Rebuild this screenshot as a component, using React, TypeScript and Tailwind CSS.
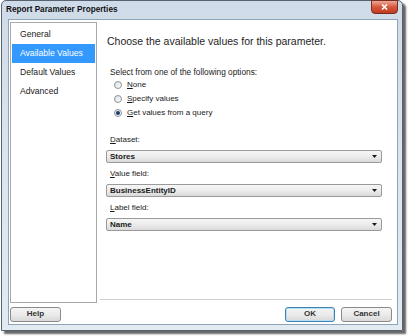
import React from 'react';

const font = { fontFamily: '"Liberation Sans", Arial, sans-serif' };

const navItems = ['General', 'Available Values', 'Default Values', 'Advanced'];

const Hot = ({ text }: { text: string }) => (
  <>
    <span className="underline">{text.charAt(0)}</span>
    {text.slice(1)}
  </>
);

const Radio = ({ checked, label }: { checked?: boolean; label: string }) => (
  <div className="flex items-center h-[14px]">
    <span className="ml-[4px] w-[8px] h-[8px] rounded-full border border-[#8e9399] bg-gradient-to-br from-[#dde1e5] to-[#fbfbfb] flex items-center justify-center">
      {checked && <span className="w-[4px] h-[4px] rounded-full bg-[#173d6b]" />}
    </span>
    <span className="ml-[5px] text-[8px] leading-[10px] text-[#1a1a1a]">
      <Hot text={label} />
    </span>
  </div>
);

const Field = ({ label, value }: { label: string; value: string }) => (
  <div className="flex flex-col">
    <span className="ml-[4px] h-[10px] text-[8px] leading-[10px] text-[#1a1a1a]">
      <Hot text={label} />
    </span>
    <div className="mt-[5px] h-[13px] rounded-[2px] border border-[#9a9a9a] bg-gradient-to-b from-[#f6f6f6] via-[#ececec] to-[#dadada] flex items-center justify-between pl-[3px] pr-[4px]">
      <span className="text-[8px] font-bold leading-none text-[#1a1a1a]">{value}</span>
      <svg width="5" height="3" viewBox="0 0 5 3">
        <path d="M0 0 H5 L2.5 3 Z" fill="#1a1a1a" />
      </svg>
    </div>
  </div>
);

const Button = ({ children, focused, w }: { children: React.ReactNode; focused?: boolean; w: string }) => (
  <div
    className={`${w} h-[15px] rounded-[3px] border ${focused ? 'border-[#3c7fb1] shadow-[inset_0_0_0_1px_#b5e0f7]' : 'border-[#8a8a8a]'} bg-gradient-to-b from-[#f4f4f4] via-[#ebebeb] to-[#d9d9d9] flex items-center justify-center text-[8px] font-bold text-[#333]`}
  >
    {children}
  </div>
);

export default function App() {
  return (
    <div className="w-[408px] h-[336px] bg-white" style={font}>
      <div className="relative ml-[1px] w-[402px] h-[331px] rounded-t-[5px] border border-[#56626f] bg-gradient-to-b from-[#cfdbe8] via-[#dbe5ef] to-[#e2eaf2] shadow-[3px_3px_2px_rgba(0,0,0,0.6)] flex flex-col">
        <div className="h-[18px] flex items-center pl-[4px]">
          <span className="text-[8.2px] font-bold text-[#111]">Report Parameter Properties</span>
        </div>
        <div className="absolute right-[4px] top-[-1px] w-[27px] h-[14px] rounded-b-[4px] border border-[#7a2c20] bg-gradient-to-b from-[#eba796] via-[#d5563c] to-[#c23a20] flex items-center justify-center">
          <svg width="7" height="6" viewBox="0 0 7 6">
            <path d="M1 0.5 L6 5.5 M6 0.5 L1 5.5" stroke="white" strokeWidth="1.6" />
          </svg>
        </div>
        <div className="flex-1 ml-[6px] mr-[4px] mb-[5px] bg-white border border-[#8fa3b8] flex flex-col pt-[2px] px-[1px] pb-[2px]">
          <div className="flex flex-1">
            <div className="w-[87px] border border-[#a8a8a8] pt-[2px] px-[1px]">
              {navItems.map((n, i) => (
                <div
                  key={n}
                  className={`h-[19px] flex items-center pl-[8px] text-[8.6px] ${i === 1 ? 'bg-[#3399ff] text-white' : 'text-[#1a1a1a]'}`}
                >
                  {n}
                </div>
              ))}
            </div>
            <div className="flex-1 ml-[3px] mr-[4px] flex flex-col">
              <div className="flex-1 flex flex-col pl-[6px] pr-[10px]">
                <div className="mt-[12px] ml-[1px] h-[14px] text-[10.5px] leading-[14px] text-[#1e1e1e]">
                  Choose the available values for this parameter.
                </div>
                <div className="mt-[19px] ml-[4px] h-[10px] text-[8.3px] leading-[10px] text-[#1a1a1a]">
                  Select from one of the following options:
                </div>
                <div className="mt-[1px] ml-[4px] flex flex-col">
                  <Radio label="None" />
                  <Radio label="Specify values" />
                  <Radio label="Get values from a query" checked />
                </div>
                <div className="mt-[15px] flex flex-col gap-[6px]">
                  <Field label="Dataset:" value="Stores" />
                  <Field label="Value field:" value="BusinessEntityID" />
                  <Field label="Label field:" value="Name" />
                </div>
              </div>
              <div className="h-[1px] bg-[#cfcfcf] mb-[3px]" />
            </div>
          </div>
          <div className="flex items-center justify-between mt-[3px] h-[16px]">
            <Button w="w-[51px]">Help</Button>
            <div className="flex gap-[6px] pr-[4px]">
              <Button w="w-[50px]" focused>OK</Button>
              <Button w="w-[51px]">Cancel</Button>
            </div>
          </div>
        </div>
      </div>
    </div>
  );
}
